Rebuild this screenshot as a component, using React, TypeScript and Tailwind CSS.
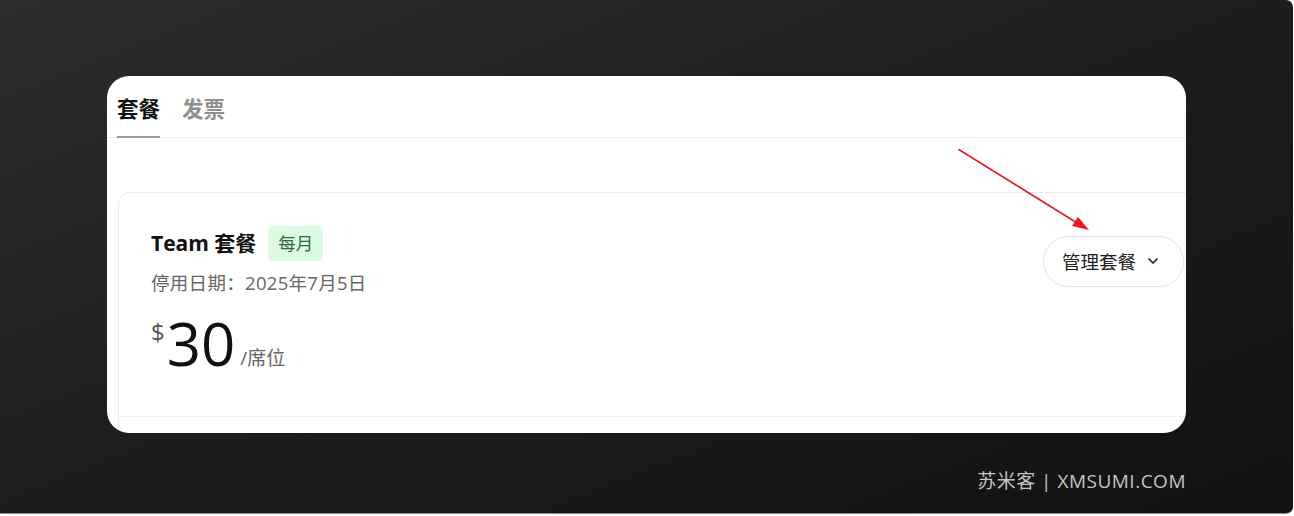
import React from 'react';

const cjk = { fontFamily: '"Open Sans", "Noto Sans CJK SC", sans-serif' };

const Chevron = () => (
    <svg width="16" height="16" viewBox="0 0 24 24" fill="none" stroke="#222" strokeWidth="2.6" strokeLinecap="round" strokeLinejoin="round">
        <path d="M6 9l6 6 6-6" />
    </svg>
);

// red annotation arrow drawn over the card
const Arrow = () => (
    <svg className="absolute left-[851px] top-[73px] pointer-events-none" width="140" height="90" viewBox="0 0 140 90">
        <line x1="0" y1="0" x2="124" y2="77" stroke="#e8191e" strokeWidth="1.6" />
        <path d="M131 81 L114 77 L120 68 Z" fill="#e8191e" />
    </svg>
);

const PlanCard = () => (
    <div className="ml-[11px] w-[1100px] h-[260px] rounded-[12px] border border-[#ececec] flex flex-col">
        <div className="h-[224px] border-b border-[#f0f0f0] pl-[32px] pr-[33px] pt-[33px]">
            <div className="flex items-center justify-between">
                <div>
                    <div className="flex items-center gap-[12px]">
                        <span className="text-[21px] font-bold text-[#111]">Team 套餐</span>
                        <span className="h-[35px] px-[10px] rounded-[5px] bg-[#dcfbe2] text-[#2f6a3c] text-[17.5px] flex items-center">每月</span>
                    </div>
                    <div className="mt-[8px] text-[18.5px] tracking-[0.3px] text-[#666]">停用日期：2025年7月5日</div>
                </div>
                <button className="h-[51px] pl-[18px] pr-[22px] rounded-full border border-[#e3e3e3] bg-white flex items-center gap-[9px] text-[18.5px] text-[#222]" style={cjk}>
                    管理套餐
                    <Chevron />
                </button>
            </div>
            <div className="mt-[16px] flex items-start">
                <span className="text-[24px] text-[#555] leading-none mt-[7px]">$</span>
                <span className="text-[60px] leading-[60px] text-[#111] ml-[2px]">30</span>
                <span className="text-[19px] text-[#666] self-end mb-[0px] ml-[5px]">/席位</span>
            </div>
        </div>
    </div>
);

export default function App() {
    return (
        <div className="w-[1294px] h-[516px] bg-white" style={cjk}>
            <div className="w-[1293px] h-[514px] rounded-r-[7px] border-b border-[#8a8a8a] bg-gradient-to-br from-[#2d2d2d] via-[#1d1d1d] to-[#121212] pt-[76px] pl-[107px] flex flex-col">
                <div className="relative w-[1079px] h-[357px] bg-white rounded-[22px] overflow-hidden">
                    <div className="flex gap-[22px] pl-[10px] pt-[5px] h-[62px] border-b border-[#ececec] items-stretch">
                        <div className="relative flex items-center text-[21.5px] font-bold text-[#111]">
                            套餐
                            <div className="absolute left-0 right-0 bottom-[-1px] h-[2px] bg-[#9a9a9a]" />
                        </div>
                        <div className="flex items-center text-[21.5px] font-bold text-[#8f8f8f]">发票</div>
                    </div>
                    <div className="h-[54px]" />
                    <PlanCard />
                    <Arrow />
                </div>
                <div className="w-[1079px] flex justify-end mt-[34px] text-[19px] tracking-[0.5px] text-[#c4c4c4]">苏米客 | XMSUMI.COM</div>
            </div>
        </div>
    );
}
